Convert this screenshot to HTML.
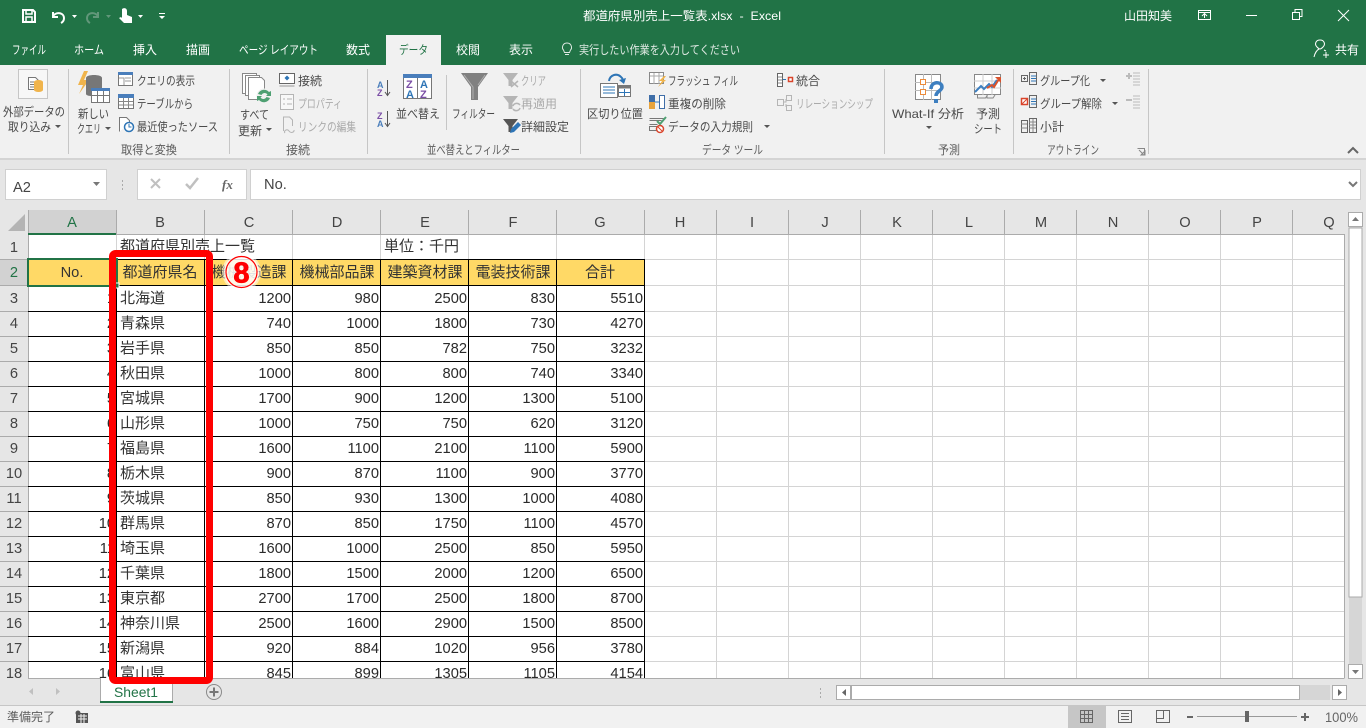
<!DOCTYPE html>
<html lang="ja"><head><meta charset="utf-8"><title>都道府県別売上一覧表.xlsx - Excel</title>
<style>
html,body{margin:0;padding:0;background:#e6e6e6;overflow:hidden}
svg{display:block}
text{font-family:"Liberation Sans","Noto Sans CJK JP",sans-serif;font-size:12px;fill:#4a4a4a;white-space:pre}
.w{fill:#fff}.d{fill:#aaa}.g{fill:#5c5c5c}
.c{font-size:15px;fill:#333}
.n{font-size:14.67px;fill:#2a2a2a;text-anchor:end}
.h{font-size:14.67px;fill:#444;text-anchor:middle}
.m{text-anchor:middle;font-size:15px;fill:#333}
.f{font-size:14.67px;fill:#444}
</style></head><body>
<svg xmlns="http://www.w3.org/2000/svg" width="1366" height="728" viewBox="0 0 1366 728">
<rect width="1366" height="728" fill="#e6e6e6"/>
<!-- title bar -->
<rect width="1366" height="65" fill="#217346"/>
<rect x="386" y="35" width="55" height="30" fill="#f1f1f1"/>
<text class="w" x="583" y="20" textLength="198" lengthAdjust="spacingAndGlyphs">都道府県別売上一覧表.xlsx  -  Excel</text>
<text class="w" x="1124" y="20" textLength="48" lengthAdjust="spacingAndGlyphs">山田知美</text>
<!-- QAT -->
<g fill="none" stroke="#fff" stroke-width="2">
<path d="M23 10h10l2 2v10H23z"/><path d="M26 10v4h6v-4M26 22v-5h6v5" stroke-width="1.5"/>
<path d="M53 12v5h5M53 16c4-5 11-3 11 2 0 2-1 4-3 5"/>
<path d="M98 12v5h-5M98 16c-4-5-11-3-11 2 0 2 1 4 3 5" stroke="#62977a"/>
</g>
<path d="M72 15h5l-2.500 3z" fill="#fff"/>
<path d="M106 15h5l-2.500 3z" fill="#62977a"/>
<path d="M122 9c3-2 5 0 5 2v4l5 2v6h-8l-5-5 2-1 1 1v-7z" fill="#fff"/>
<path d="M138 15h5l-2.500 3zM159 16h6l-3 3zM159 13h6v1h-6z" fill="#fff"/>
<g fill="none" stroke="#fff" stroke-width="1">
<path d="M1198.500 10.500h12v9h-12zM1198.500 12.500h12M1204.500 18v-4M1202 16l2.500-2.500 2.500 2.500"/>
<path d="M1246 15.500h11"/>
<path d="M1292.500 12.500h7v7h-7zM1295 12v-2.500h7v7h-2.500"/>
<path d="M1338 10l11 11M1349 10l-11 11"/>
<path d="M563.500 50c-2-2-1-7 3.500-7s5.500 5 3.500 7l-1 2.500h-5zM565 54.500h4" stroke="#dfe9e3"/>
<path d="M1317 47c-3-3-1-7 3-7s6 4 3 7c-1 1-2 2-3 2s-2-1-3-2zM1314 57c1-4 3-7 5-8M1324 50l2 1M1326 52v6M1323 55h6"/>
</g>
<!-- tabs -->
<g class="tabs">
<text class="w" x="12" y="54" textLength="34" lengthAdjust="spacingAndGlyphs">ファイル</text>
<text class="w" x="74" y="54" textLength="30" lengthAdjust="spacingAndGlyphs">ホーム</text>
<text class="w" x="133" y="54" textLength="24" lengthAdjust="spacingAndGlyphs">挿入</text>
<text class="w" x="186" y="54" textLength="24" lengthAdjust="spacingAndGlyphs">描画</text>
<text class="w" x="239" y="54" textLength="79" lengthAdjust="spacingAndGlyphs">ページ レイアウト</text>
<text class="w" x="346" y="54" textLength="24" lengthAdjust="spacingAndGlyphs">数式</text>
<text x="399" y="54" textLength="29" lengthAdjust="spacingAndGlyphs" style="fill:#217346">データ</text>
<text class="w" x="456" y="54" textLength="24" lengthAdjust="spacingAndGlyphs">校閲</text>
<text class="w" x="509" y="54" textLength="24" lengthAdjust="spacingAndGlyphs">表示</text>
<text x="579" y="54" textLength="161" lengthAdjust="spacingAndGlyphs" style="fill:#dfe9e3">実行したい作業を入力してください</text>
<text class="w" x="1335" y="54" textLength="24" lengthAdjust="spacingAndGlyphs">共有</text>
</g>
<!-- ribbon -->
<rect y="65" width="1366" height="93" fill="#f1f1f1"/>
<rect y="158" width="1366" height="2" fill="#d4d4d4"/>
<g stroke="#c6c6c6" stroke-width="1">
<path d="M68.500 69v85M229.500 69v85M367.500 69v85M580.500 69v85M884.500 69v85M1013.500 69v85M1148.500 69v85M446.500 75v55"/>
</g>
<text x="3" y="116" textLength="62" lengthAdjust="spacingAndGlyphs">外部データの</text>
<text x="8" y="131" textLength="43" lengthAdjust="spacingAndGlyphs">取り込み</text>
<text x="78" y="118" textLength="31" lengthAdjust="spacingAndGlyphs">新しい</text>
<text x="77" y="133" textLength="24" lengthAdjust="spacingAndGlyphs">クエリ</text>
<text x="137" y="85" textLength="58" lengthAdjust="spacingAndGlyphs">クエリの表示</text>
<text x="137" y="108" textLength="56" lengthAdjust="spacingAndGlyphs">テーブルから</text>
<text x="137" y="131" textLength="81" lengthAdjust="spacingAndGlyphs">最近使ったソース</text>
<text x="240" y="119" textLength="29" lengthAdjust="spacingAndGlyphs">すべて</text>
<text x="238" y="135" textLength="24" lengthAdjust="spacingAndGlyphs">更新</text>
<text x="298" y="85" textLength="24" lengthAdjust="spacingAndGlyphs">接続</text>
<text class="d" x="298" y="108" textLength="44" lengthAdjust="spacingAndGlyphs">プロパティ</text>
<text class="d" x="298" y="131" textLength="58" lengthAdjust="spacingAndGlyphs">リンクの編集</text>
<text x="396" y="118" textLength="44" lengthAdjust="spacingAndGlyphs">並べ替え</text>
<text x="452" y="118" textLength="43" lengthAdjust="spacingAndGlyphs">フィルター</text>
<text class="d" x="521" y="85" textLength="25" lengthAdjust="spacingAndGlyphs">クリア</text>
<text class="d" x="521" y="108" textLength="36" lengthAdjust="spacingAndGlyphs">再適用</text>
<text x="521" y="131" textLength="48" lengthAdjust="spacingAndGlyphs">詳細設定</text>
<text x="587" y="118" textLength="56" lengthAdjust="spacingAndGlyphs">区切り位置</text>
<text x="668" y="85" textLength="70" lengthAdjust="spacingAndGlyphs">フラッシュ フィル</text>
<text x="668" y="108" textLength="58" lengthAdjust="spacingAndGlyphs">重複の削除</text>
<text x="668" y="131" textLength="85" lengthAdjust="spacingAndGlyphs">データの入力規則</text>
<text x="796" y="85" textLength="24" lengthAdjust="spacingAndGlyphs">統合</text>
<text class="d" x="796" y="108" textLength="77" lengthAdjust="spacingAndGlyphs">リレーションシップ</text>
<text x="892" y="118" textLength="72" lengthAdjust="spacingAndGlyphs">What-If 分析</text>
<text x="976" y="118" textLength="24" lengthAdjust="spacingAndGlyphs">予測</text>
<text x="974" y="133" textLength="28" lengthAdjust="spacingAndGlyphs">シート</text>
<text x="1040" y="85" textLength="50" lengthAdjust="spacingAndGlyphs">グループ化</text>
<text x="1040" y="108" textLength="62" lengthAdjust="spacingAndGlyphs">グループ解除</text>
<text x="1040" y="131" textLength="24" lengthAdjust="spacingAndGlyphs">小計</text>
<g class="lbl">
<text class="g" x="121" y="154" textLength="56" lengthAdjust="spacingAndGlyphs">取得と変換</text>
<text class="g" x="286" y="154" textLength="24" lengthAdjust="spacingAndGlyphs">接続</text>
<text class="g" x="427" y="154" textLength="93" lengthAdjust="spacingAndGlyphs">並べ替えとフィルター</text>
<text class="g" x="702" y="154" textLength="61" lengthAdjust="spacingAndGlyphs">データ ツール</text>
<text class="g" x="938" y="154" textLength="22" lengthAdjust="spacingAndGlyphs">予測</text>
<text class="g" x="1047" y="154" textLength="52" lengthAdjust="spacingAndGlyphs">アウトライン</text>
</g>
<!-- carets -->
<path d="M55 125h6l-3 3zM105 127h6l-3 3zM266 128h6l-3 3zM764 125h6l-3 3zM926 126h6l-3 3zM1100 79h6l-3 3zM1112 102h6l-3 3z" fill="#555"/>
<!-- external data icon -->
<rect x="18.500" y="69.500" width="29" height="29" fill="#f7f7f7" stroke="#c6c6c6"/>
<path d="M28.500 77.500h7l3 3v9h-10z" fill="#fff" stroke="#777"/>
<path d="M30 82h5M30 84.500h4M30 87h4" stroke="#777"/>
<path d="M34 82a4.500 2 0 0 1 9 0v8a4.500 2 0 0 1-9 0z" fill="#f0b44c"/>
<!-- new query -->
<path d="M84 71l-6 14h5l-4 9 10-14h-5l4-9z" fill="#f0b44c"/>
<path d="M86 78c0-4 16-4 16 0v16c0 3-16 3-16 0z" fill="#777"/>
<rect x="91.500" y="88.500" width="18" height="14" fill="#fff" stroke="#777"/>
<rect x="91" y="88" width="19" height="3" fill="#4a7ebb"/>
<path d="M91.500 95.500h18M97.500 91v11M103.500 91v11" stroke="#777"/>
<!-- small query icons -->
<rect x="118.500" y="73.500" width="14" height="12" fill="#fff" stroke="#777"/><rect x="118" y="72" width="15" height="3" fill="#4a7ebb"/>
<path d="M119 78h5v7M125 78h6M125 81h6" fill="none" stroke="#999"/>
<rect x="118.500" y="95.500" width="15" height="13" fill="#fff" stroke="#777"/><rect x="118" y="94" width="16" height="4" fill="#4a7ebb"/>
<path d="M119 101.500h14M119 105h14M123.500 98v10M128.500 98v10" stroke="#888"/>
<path d="M119.500 131.500v-14h7l3 3v3" fill="#fff" stroke="#777"/>
<circle cx="129" cy="127" r="4.500" fill="#fff" stroke="#2e75b6" stroke-width="1.500"/><path d="M129 124v3h2.500" fill="none" stroke="#2e75b6"/>
<!-- refresh all -->
<g fill="#fff" stroke="#888"><path d="M242.500 73.500h14v20h-14z"/><path d="M245.500 75.500h14v20h-14z"/><path d="M248.500 77.500h13l3 3v19h-16z"/></g>
<circle cx="264" cy="96" r="7.500" fill="#f1f1f1"/>
<path d="M258 94a6.500 6.500 0 0 1 11-2l2-1v5h-5l1.500-1.500a3.500 3.500 0 0 0-6 .5zM270 98a6.500 6.500 0 0 1-11 2l-2 1v-5h5l-1.500 1.500a3.500 3.500 0 0 0 6-.5z" fill="#4ea072"/>
<!-- connections -->
<rect x="279.500" y="73.500" width="15" height="10" fill="#fff" stroke="#666"/>
<path d="M287 75.500l2.500 2.500-2.500 2.500-2.500-2.500z" fill="#2e75b6"/>
<path d="M279.500 86h15" stroke="#999" fill="none"/>
<g stroke="#b5b5b5" fill="none"><rect x="280.500" y="94.500" width="13" height="15" fill="#f8f8f8"/><path d="M283 99h2M287 99h5M283 104h2M287 104h5"/>
<path d="M283.500 131v-14h6l3 3v6M285 133a2.500 2 0 0 1 3-3l2 2a2.500 2 0 0 0 4-2"/></g>
<!-- sort -->
<text x="377" y="88" style="font-size:9px;fill:#4a7ebb;font-weight:bold">A</text>
<text x="377" y="96" style="font-size:9px;fill:#7b4ea6;font-weight:bold">Z</text>
<path d="M387.500 80v15M385 92l2.500 3.500 2.500-3.500" fill="none" stroke="#555"/>
<text x="377" y="119" style="font-size:9px;fill:#7b4ea6;font-weight:bold">Z</text>
<text x="377" y="127" style="font-size:9px;fill:#4a7ebb;font-weight:bold">A</text>
<path d="M387.500 111v15M385 123l2.500 3.500 2.500-3.500" fill="none" stroke="#555"/>
<rect x="403.500" y="74.500" width="28" height="24" fill="#fff" stroke="#777"/>
<rect x="403" y="74" width="29" height="4" fill="#4a7ebb"/>
<path d="M417.500 78v20" stroke="#777"/>
<text x="406" y="88" style="font-size:11px;fill:#7b4ea6;font-weight:bold">Z</text>
<text x="406" y="98" style="font-size:11px;fill:#2e75b6;font-weight:bold">A</text>
<text x="420" y="88" style="font-size:11px;fill:#2e75b6;font-weight:bold">A</text>
<text x="420" y="98" style="font-size:11px;fill:#7b4ea6;font-weight:bold">Z</text>
<!-- filter -->
<path d="M461 73h27l-10 14v13h-7V87z" fill="#808080"/>
<path d="M464 75l9 12v12M485 75l-7 10" fill="none" stroke="#b0b0b0"/>
<path d="M503 73h15l-5.500 7v6h-4v-6z" fill="#b5b5b5"/>
<path d="M511 81l7 6M518 81l-7 6" stroke="#b5b5b5" stroke-width="1.500"/>
<path d="M503 96h15l-5.500 7v6h-4v-6z" fill="#b5b5b5"/>
<path d="M513 106a4 4 0 0 1 7-1M520 108a4 4 0 0 1-7 1" fill="none" stroke="#b5b5b5" stroke-width="1.500"/>
<path d="M503 119h15l-5.500 7v6h-4v-6z" fill="#555"/>
<path d="M510 133l1-4 7-7 3 3-7 7z" fill="#2e75b6"/>
<!-- text to columns -->
<rect x="600.500" y="83.500" width="17" height="14" fill="#fff" stroke="#777"/>
<path d="M603 87h12M603 90h12M603 93h12" stroke="#2e75b6"/>
<rect x="618.500" y="85.500" width="12" height="11" fill="#fff" stroke="#777"/>
<path d="M619 85.500h11v3h-11z" fill="#777"/><path d="M619 92.500h11M624.500 89v7" stroke="#2e75b6"/>
<path d="M609 81c1-6 8-9 13-3l2 4" fill="none" stroke="#2e75b6" stroke-width="2"/>
<path d="M619 80l5 4 2-6z" fill="#2e75b6"/>
<!-- flash fill, dup, validation -->
<rect x="649.500" y="72.500" width="14" height="11" fill="#fff" stroke="#888"/>
<path d="M650 76h13M654 73v11M659 73v11" stroke="#aaa"/>
<path d="M664 76l-5 5h3l-4 6 8-7h-3l3-4z" fill="#f0b44c"/>
<rect x="649" y="95" width="6" height="14" fill="#3f6ea8"/><rect x="649" y="102" width="6" height="7" fill="#e8a33c"/>
<rect x="659.500" y="95.500" width="5" height="13" fill="#fff" stroke="#3f6ea8"/>
<path d="M655 102h4" stroke="#2e75b6"/>
<path d="M649.500 118.500h14M649.500 124.500h8M649.500 130.500h8v-4h-8zM649.500 120.500h12" stroke="#777" fill="none"/>
<path d="M657 121l3 3 6-7" fill="none" stroke="#4ea072" stroke-width="2"/>
<circle cx="660" cy="129" r="3.500" fill="#fff" stroke="#d9442b" stroke-width="1.500"/><path d="M658 127l4 4" stroke="#d9442b"/>
<!-- consolidate, relationships -->
<rect x="777.500" y="73.500" width="5" height="13" fill="#fff" stroke="#666"/><path d="M778 77h4M778 80h4M778 83h4" stroke="#888"/>
<path d="M783 79.500h3" stroke="#2e75b6"/><rect x="788.500" y="77.500" width="4" height="4" fill="#fff" stroke="#d9442b" stroke-width="1.500"/>
<g fill="none" stroke="#b5b5b5"><path d="M777.500 99.500h6v6h-6zM786.500 95.500h5v5h-5zM786.500 105.500h5v5h-5zM783 102h3v-3M786 104v3"/></g>
<!-- what-if -->
<rect x="915.500" y="74.500" width="25" height="25" fill="#fff" stroke="#888"/>
<path d="M915 82.500h26M915 90.500h26M923.500 74v26M931.500 74v26" stroke="#bbb"/>
<rect x="920.500" y="79.500" width="5" height="5" fill="#fff" stroke="#ed8b3a"/>
<rect x="920.500" y="89.500" width="5" height="5" fill="#fff" stroke="#ed8b3a"/>
<path d="M931 89c0-8 11-8 11-2 0 4-6 4-6 9" fill="none" stroke="#3d7fc0" stroke-width="3.500"/>
<rect x="934" y="99" width="4" height="4" fill="#3d7fc0"/>
<!-- forecast -->
<rect x="974.500" y="74.500" width="26" height="20" fill="#fff" stroke="#888"/>
<path d="M974 81h27M974 88h27M983 74v21M992 74v21" stroke="#ccc"/>
<path d="M975 92l6-6 3 3 5-5 3 3 5-7" fill="none" stroke="#3d7fc0" stroke-width="2"/>
<path d="M987 88l5-3 2 2 5-8" fill="none" stroke="#d9532c" stroke-width="2"/><path d="M995 77h6v6z" fill="#d9532c"/>
<path d="M977.500 95v3h8l2-3M987 95v3h6l2-3" fill="none" stroke="#888"/>
<!-- outline -->
<g fill="none" stroke="#666">
<rect x="1021.500" y="75.500" width="6" height="6"/><rect x="1029.500" y="72.500" width="7" height="12"/>
<rect x="1029.500" y="95.500" width="7" height="12"/><rect x="1021.500" y="120.500" width="6" height="12"/><rect x="1029.500" y="118.500" width="7" height="14"/>
<path d="M1023 78.500h3M1024.500 77v3"/></g>
<path d="M1031 76h5M1031 78.500h5M1031 81h5M1031 99h5M1031 101.500h5M1031 104h5" stroke="#2e75b6"/>
<path d="M1021 124h6M1021 128h6M1029 122h7M1029 125h7M1029 128h7M1033 119v13" stroke="#888"/>
<rect x="1021.500" y="98.500" width="6" height="6" fill="#fff" stroke="#d9442b" stroke-width="1.500"/><path d="M1022 104l5-5" stroke="#d9442b"/>
<path d="M1126 76h6M1129 73v6M1126 100h6" stroke="#bbb" stroke-width="2"/>
<path d="M1133 73h7M1133 76h7M1133 79h7M1133 82h7M1133 85h7M1133 96h7M1133 99h7M1133 102h7M1133 105h7M1133 108h7" stroke="#bbb"/>
<path d="M1137.500 148.500h7v6M1139 150l4.500 4.500M1141 155h4v-4z" fill="none" stroke="#888"/>
<path d="M1348 153l5-5 5 5" fill="none" stroke="#666" stroke-width="2"/>
<!-- formula bar -->
<rect x="5.500" y="169.500" width="101" height="30" fill="#fff" stroke="#d0d0d0"/>
<text class="f" x="13" y="192">A2</text>
<path d="M93 182h7l-3.500 4z" fill="#777"/>
<path d="M122.500 180v2M122.500 184v2M122.500 188v2" stroke="#aaa"/>
<rect x="137.500" y="169.500" width="109" height="30" fill="#fff" stroke="#d0d0d0"/>
<path d="M151 179l9 9M160 179l-9 9" stroke="#c0c0c0" stroke-width="2"/>
<path d="M186 184l4 4 8-10" fill="none" stroke="#c0c0c0" stroke-width="2.500"/>
<text x="222" y="189" style="font-family:'Liberation Serif',serif;font-style:italic;font-weight:bold;font-size:13px;fill:#666">fx</text>
<rect x="250.500" y="169.500" width="1110" height="30" fill="#fff" stroke="#d0d0d0"/>
<text class="f" x="264" y="189">No.</text>
<path d="M1349 182l4 4 4-4" fill="none" stroke="#777" stroke-width="2"/>
<!-- grid -->
<rect x="28" y="235" width="1316" height="443" fill="#fff"/>
<rect x="28" y="210" width="88" height="24" fill="#d2d2d2"/>
<rect y="260" width="28" height="25" fill="#d2d2d2"/>
<path d="M25 214v17H8z" fill="#b4b4b4"/>
<!-- header fills -->
<rect x="28" y="260" width="616" height="25" fill="#ffd966"/>
<!-- light gridlines -->
<g stroke="#d4d4d4" fill="none">
<path d="M116.500 235v24M204.500 235v24M292.500 235v24M380.500 235v24M468.500 235v24M556.500 235v24M644.500 235v24"/>
<path d="M644.500 235V678M716.500 235V678M788.500 235V678M860.500 235V678M932.500 235V678M1004.500 235V678M1076.500 235V678M1148.500 235V678M1220.500 235V678M1292.500 235V678"/>
<path d="M28 259.500H1344M644 285.500H1344M644 311.500H1344M644 336.500H1344M644 361.500H1344M644 386.500H1344M644 411.500H1344M644 436.500H1344M644 461.500H1344M644 486.500H1344M644 511.500H1344M644 536.500H1344M644 561.500H1344M644 586.500H1344M644 611.500H1344M644 636.500H1344M644 661.500H1344"/>
</g>
<!-- header seps -->
<g stroke="#ababab" fill="none">
<path d="M28.500 210V678M116.500 210v24M204.500 210v24M292.500 210v24M380.500 210v24M468.500 210v24M556.500 210v24M644.500 210v24M716.500 210v24M788.500 210v24M860.500 210v24M932.500 210v24M1004.500 210v24M1076.500 210v24M1148.500 210v24M1220.500 210v24M1292.500 210v24"/>
<path d="M0 259.500h28M0 285.500h28M0 311.500h28M0 336.500h28M0 361.500h28M0 386.500h28M0 411.500h28M0 436.500h28M0 461.500h28M0 486.500h28M0 511.500h28M0 536.500h28M0 561.500h28M0 586.500h28M0 611.500h28M0 636.500h28M0 661.500h28"/>
<path d="M28 234.500H1344.500V678M28 678.500H1344.500"/>
</g>
<!-- black borders -->
<g stroke="#000" fill="none">
<path d="M116 259.500H645M28 285.500H645M28 311.500H645M28 336.500H645M28 361.500H645M28 386.500H645M28 411.500H645M28 436.500H645M28 461.500H645M28 486.500H645M28 511.500H645M28 536.500H645M28 561.500H645M28 586.500H645M28 611.500H645M28 636.500H645M28 661.500H645"/>
<path d="M116.500 259V678M204.500 259V678M292.500 259V678M380.500 259V678M468.500 259V678M556.500 259V678M644.500 259V678"/>
</g>
<!-- col headers -->
<text class="h" x="72" y="227" style="fill:#217346">A</text>
<text class="h" x="160" y="227">B</text><text class="h" x="249" y="227">C</text><text class="h" x="337" y="227">D</text>
<text class="h" x="425" y="227">E</text><text class="h" x="513" y="227">F</text><text class="h" x="600" y="227">G</text>
<text class="h" x="680" y="227">H</text><text class="h" x="752" y="227">I</text><text class="h" x="825" y="227">J</text>
<text class="h" x="897" y="227">K</text><text class="h" x="969" y="227">L</text><text class="h" x="1041" y="227">M</text>
<text class="h" x="1113" y="227">N</text><text class="h" x="1185" y="227">O</text><text class="h" x="1257" y="227">P</text><text class="h" x="1329" y="227">Q</text>
<rect x="28" y="233" width="88" height="2" fill="#217346"/>
<!-- row headers -->
<text class="h" x="14" y="252">1</text><text class="h" x="14" y="277" style="fill:#217346">2</text>
<text class="h" x="14" y="303">3</text><text class="h" x="14" y="328">4</text><text class="h" x="14" y="353">5</text>
<text class="h" x="14" y="378">6</text><text class="h" x="14" y="403">7</text><text class="h" x="14" y="428">8</text>
<text class="h" x="14" y="453">9</text><text class="h" x="14" y="478">10</text><text class="h" x="14" y="503">11</text>
<text class="h" x="14" y="528">12</text><text class="h" x="14" y="553">13</text><text class="h" x="14" y="578">14</text>
<text class="h" x="14" y="603">15</text><text class="h" x="14" y="628">16</text><text class="h" x="14" y="653">17</text>
<svg x="0" y="235" width="1344" height="443" viewBox="0 235 1344 443" overflow="hidden">
<text class="h" x="14" y="678">18</text>
<text class="c" x="120" y="678">富山県</text>
<text class="n" x="115" y="678">16</text><text class="n" x="291" y="678">845</text><text class="n" x="379" y="678">899</text><text class="n" x="467" y="678">1305</text><text class="n" x="555" y="678">1105</text><text class="n" x="643" y="678">4154</text>
</svg>
<!-- cells -->
<text class="c" x="120" y="251">都道府県別売上一覧</text>
<text class="c" x="384" y="251">単位：千円</text>
<text class="m" x="72" y="277" style="font-size:14.67px">No.</text>
<text class="m" x="160" y="277">都道府県名</text>
<text class="m" x="249" y="277">機械製造課</text>
<text class="m" x="337" y="277">機械部品課</text>
<text class="m" x="425" y="277">建築資材課</text>
<text class="m" x="513" y="277">電装技術課</text>
<text class="m" x="600" y="277">合計</text>
<g>
<text class="n" x="115" y="303">1</text><text class="c" x="120" y="303">北海道</text><text class="n" x="291" y="303">1200</text><text class="n" x="379" y="303">980</text><text class="n" x="467" y="303">2500</text><text class="n" x="555" y="303">830</text><text class="n" x="643" y="303">5510</text>
<text class="n" x="115" y="328">2</text><text class="c" x="120" y="328">青森県</text><text class="n" x="291" y="328">740</text><text class="n" x="379" y="328">1000</text><text class="n" x="467" y="328">1800</text><text class="n" x="555" y="328">730</text><text class="n" x="643" y="328">4270</text>
<text class="n" x="115" y="353">3</text><text class="c" x="120" y="353">岩手県</text><text class="n" x="291" y="353">850</text><text class="n" x="379" y="353">850</text><text class="n" x="467" y="353">782</text><text class="n" x="555" y="353">750</text><text class="n" x="643" y="353">3232</text>
<text class="n" x="115" y="378">4</text><text class="c" x="120" y="378">秋田県</text><text class="n" x="291" y="378">1000</text><text class="n" x="379" y="378">800</text><text class="n" x="467" y="378">800</text><text class="n" x="555" y="378">740</text><text class="n" x="643" y="378">3340</text>
<text class="n" x="115" y="403">5</text><text class="c" x="120" y="403">宮城県</text><text class="n" x="291" y="403">1700</text><text class="n" x="379" y="403">900</text><text class="n" x="467" y="403">1200</text><text class="n" x="555" y="403">1300</text><text class="n" x="643" y="403">5100</text>
<text class="n" x="115" y="428">6</text><text class="c" x="120" y="428">山形県</text><text class="n" x="291" y="428">1000</text><text class="n" x="379" y="428">750</text><text class="n" x="467" y="428">750</text><text class="n" x="555" y="428">620</text><text class="n" x="643" y="428">3120</text>
<text class="n" x="115" y="453">7</text><text class="c" x="120" y="453">福島県</text><text class="n" x="291" y="453">1600</text><text class="n" x="379" y="453">1100</text><text class="n" x="467" y="453">2100</text><text class="n" x="555" y="453">1100</text><text class="n" x="643" y="453">5900</text>
<text class="n" x="115" y="478">8</text><text class="c" x="120" y="478">栃木県</text><text class="n" x="291" y="478">900</text><text class="n" x="379" y="478">870</text><text class="n" x="467" y="478">1100</text><text class="n" x="555" y="478">900</text><text class="n" x="643" y="478">3770</text>
<text class="n" x="115" y="503">9</text><text class="c" x="120" y="503">茨城県</text><text class="n" x="291" y="503">850</text><text class="n" x="379" y="503">930</text><text class="n" x="467" y="503">1300</text><text class="n" x="555" y="503">1000</text><text class="n" x="643" y="503">4080</text>
<text class="n" x="115" y="528">10</text><text class="c" x="120" y="528">群馬県</text><text class="n" x="291" y="528">870</text><text class="n" x="379" y="528">850</text><text class="n" x="467" y="528">1750</text><text class="n" x="555" y="528">1100</text><text class="n" x="643" y="528">4570</text>
<text class="n" x="115" y="553">11</text><text class="c" x="120" y="553">埼玉県</text><text class="n" x="291" y="553">1600</text><text class="n" x="379" y="553">1000</text><text class="n" x="467" y="553">2500</text><text class="n" x="555" y="553">850</text><text class="n" x="643" y="553">5950</text>
<text class="n" x="115" y="578">12</text><text class="c" x="120" y="578">千葉県</text><text class="n" x="291" y="578">1800</text><text class="n" x="379" y="578">1500</text><text class="n" x="467" y="578">2000</text><text class="n" x="555" y="578">1200</text><text class="n" x="643" y="578">6500</text>
<text class="n" x="115" y="603">13</text><text class="c" x="120" y="603">東京都</text><text class="n" x="291" y="603">2700</text><text class="n" x="379" y="603">1700</text><text class="n" x="467" y="603">2500</text><text class="n" x="555" y="603">1800</text><text class="n" x="643" y="603">8700</text>
<text class="n" x="115" y="628">14</text><text class="c" x="120" y="628">神奈川県</text><text class="n" x="291" y="628">2500</text><text class="n" x="379" y="628">1600</text><text class="n" x="467" y="628">2900</text><text class="n" x="555" y="628">1500</text><text class="n" x="643" y="628">8500</text>
<text class="n" x="115" y="653">15</text><text class="c" x="120" y="653">新潟県</text><text class="n" x="291" y="653">920</text><text class="n" x="379" y="653">884</text><text class="n" x="467" y="653">1020</text><text class="n" x="555" y="653">956</text><text class="n" x="643" y="653">3780</text>
</g>
<!-- selection -->
<rect x="28" y="259" width="89" height="27" fill="none" stroke="#217346" stroke-width="2"/>
<rect x="114" y="283" width="5" height="5" fill="#217346" stroke="#fff"/>
<!-- scrollbars -->
<rect x="1349" y="212" width="13" height="466" fill="#d6d6d6"/>
<rect x="1349" y="228" width="13" height="369" fill="#fff" stroke="#ababab"/>
<rect x="1348.500" y="212.500" width="14" height="14" fill="#fff" stroke="#ababab"/>
<path d="M1352 221h7l-3.500-4z" fill="#777"/>
<rect x="1348.500" y="664.500" width="14" height="14" fill="#fff" stroke="#ababab"/>
<path d="M1352 670h7l-3.500 4z" fill="#777"/>
<path d="M33 688v7l-4-3.500zM56 688v7l4-3.500z" fill="#c0c0c0"/>
<path d="M100.500 678v24h72v-24" fill="#fff" stroke="#ababab"/>
<rect x="100" y="701" width="73" height="2" fill="#217346"/>
<text x="114" y="697" textLength="44" lengthAdjust="spacingAndGlyphs" style="font-size:13.500px;fill:#217346">Sheet1</text>
<circle cx="214" cy="692" r="7.500" fill="#e6e6e6" stroke="#8a8a8a"/>
<path d="M209.500 692h9M214 687.500v9" stroke="#777" stroke-width="2"/>
<path d="M820.500 688v2M820.500 692v2M820.500 696v2" stroke="#aaa"/>
<rect x="836.500" y="685.500" width="14" height="14" fill="#fff" stroke="#ababab"/>
<path d="M846 689v7l-4-3.500z" fill="#666"/>
<rect x="851" y="685" width="479" height="15" fill="#d6d6d6"/>
<rect x="851.500" y="685.500" width="448" height="14" fill="#fff" stroke="#ababab"/>
<rect x="1332.500" y="685.500" width="14" height="14" fill="#fff" stroke="#ababab"/>
<path d="M1338 689v7l4-3.500z" fill="#666"/>
<!-- status bar -->
<rect y="706" width="1366" height="22" fill="#f1f1f1"/>
<rect y="705" width="1366" height="1" fill="#c6c6c6"/>
<text class="g" x="7" y="721" textLength="48" lengthAdjust="spacingAndGlyphs">準備完了</text>
<rect x="76" y="713" width="12" height="10" fill="#555"/><circle cx="78" cy="713" r="2.500" fill="#555"/>
<path d="M78 716h9M78 719h9M81 714v9M84 714v9" stroke="#f1f1f1"/>
<rect x="1068" y="706" width="38" height="22" fill="#c6c6c6"/>
<path d="M1080.500 710.500h12v12h-12zM1084.500 710v13M1088.500 710v13M1080 714.500h13M1080 718.500h13" fill="none" stroke="#666"/>
<path d="M1118.500 710.500h13v12h-13zM1121 713.500h8M1121 716.500h8M1121 719.500h8" fill="none" stroke="#666"/>
<path d="M1156.500 710.500h13v12h-13zM1156.500 718.500h7v-8" fill="none" stroke="#666"/>
<path d="M1187 717h6" stroke="#666" stroke-width="2"/>
<path d="M1197 716.500h100" stroke="#999"/>
<rect x="1245" y="711" width="4" height="11" fill="#666"/>
<path d="M1301 717h8M1305 713v8" stroke="#666" stroke-width="2"/>
<text x="1325" y="722" style="font-size:13.500px;fill:#666" textLength="33" lengthAdjust="spacingAndGlyphs">100%</text>
<!-- annotation -->
<rect x="112.500" y="253.500" width="97" height="427" rx="3" fill="none" stroke="#f00" stroke-width="7"/>
<circle cx="241.500" cy="272" r="19.500" fill="#fff" fill-opacity=".5"/>
<circle cx="241.500" cy="272" r="17.500" fill="#fff" fill-opacity=".72"/>
<circle cx="241.500" cy="272" r="15.500" fill="none" stroke="#f00" stroke-width="1.200"/>
<text x="241.500" y="282.500" text-anchor="middle" style="font-size:29px;font-weight:bold;fill:#f00;stroke:#f00;stroke-width:.8">8</text>
</svg>
</body></html>
